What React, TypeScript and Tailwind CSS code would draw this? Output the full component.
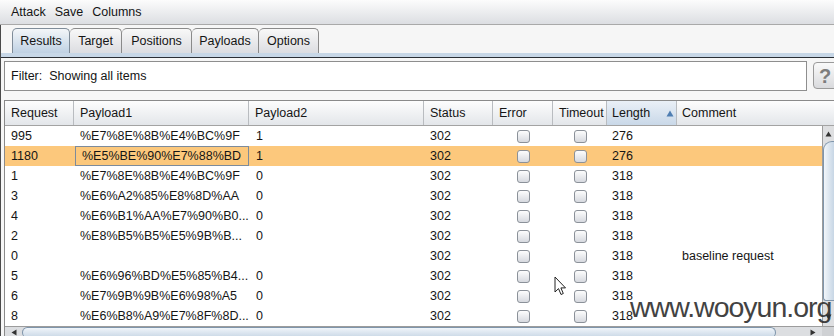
const rows = [
  { req: '995', p1: '%E7%8E%8B%E4%BC%9F', p2: '1', len: '276', comment: '' },
  { req: '1180', p1: '%E5%BE%90%E7%88%BD', p2: '1', len: '276', comment: '', selected: true },
  { req: '1', p1: '%E7%8E%8B%E4%BC%9F', p2: '0', len: '318', comment: '' },
  { req: '3', p1: '%E6%A2%85%E8%8D%AA', p2: '0', len: '318', comment: '' },
  { req: '4', p1: '%E6%B1%AA%E7%90%B0...', p2: '0', len: '318', comment: '' },
  { req: '2', p1: '%E8%B5%B5%E5%9B%B...', p2: '0', len: '318', comment: '' },
  { req: '0', p1: '', p2: '', len: '318', comment: 'baseline request' },
  { req: '5', p1: '%E6%96%BD%E5%85%B4...', p2: '0', len: '318', comment: '' },
  { req: '6', p1: '%E7%9B%9B%E6%98%A5', p2: '0', len: '318', comment: '' },
  { req: '8', p1: '%E6%B8%A9%E7%8F%8D...', p2: '0', len: '318', comment: '' },
]

const tabs = [
  { label: 'Results', w: 'w-[58px]' },
  { label: 'Target', w: 'w-[52px]' },
  { label: 'Positions', w: 'w-[70px]' },
  { label: 'Payloads', w: 'w-[67px]' },
  { label: 'Options', w: 'w-[60px]' },
]

function Checkbox() {
  return (
    <span className="block w-[13px] h-[13px] rounded-[3px] border border-[#8b9199] bg-gradient-to-b from-[#fdfdfd] to-[#d6d9df]" />
  )
}

export default function App() {
  return (
    <div className="relative w-[834px] h-[336px] overflow-hidden bg-[#f6f6f6] text-[#151515] text-[12.5px] font-['Liberation_Sans',Arial,sans-serif]">
      {/* Menu bar */}
      <div className="h-[25px] flex items-center gap-[9px] pl-[11px] border-b border-[#a9a9a9] bg-gradient-to-b from-[#fcfcfc] to-[#dcdee2]">
        <span>Attack</span>
        <span>Save</span>
        <span>Columns</span>
      </div>

      <div className="border-l border-[#4a4a4a] h-[311px]">
        {/* Tabs */}
        <div className="h-[28px] flex items-end pl-[11px]">
          {tabs.map((t, i) => (
            <div
              key={t.label}
              className={
                i === 0
                  ? `${t.w} h-[25px] flex items-center justify-center rounded-t-[5px] border border-b-0 border-[#7f8c99] bg-gradient-to-b from-[#f3f6f9] to-[#bfd1e3]`
                  : `${t.w} h-[25px] flex items-center justify-center rounded-t-[5px] border border-b-0 border-l-0 border-[#8a8a8a] bg-gradient-to-b from-[#f8f8f8] to-[#dcdde1]`
              }
            >
              {t.label}
            </div>
          ))}
        </div>
        <div className="h-[4px] bg-[#c7d7e7]" />
        <div className="h-[1px] bg-[#2b2f35]" />

        {/* Filter */}
        <div className="flex mt-[3px] pl-[3px]">
          <div className="w-[803px] h-[30px] shrink-0 flex items-center pl-[6px] bg-white border border-[#8e8e8e]">
            Filter:&nbsp; Showing all items
          </div>
          <div className="ml-[6px] mt-[1px] w-[28px] h-[27px] shrink-0 rounded-[4px] border border-[#9a9a9a] bg-gradient-to-b from-[#fafafa] to-[#d9dadd] flex items-center pl-[5px] text-[20px] font-bold text-[#7d7d7d]">
            ?
          </div>
        </div>

        {/* Table */}
        <div className="mt-[9px] ml-[3px] border-l border-t border-[#8a8a8a]">
          <div className="h-[25px] grid grid-cols-[69px_175px_175px_69px_60px_54px_70px_1fr] border-b border-[#a3a3a3] bg-gradient-to-b from-[#fdfdfd] to-[#e3e6ea]">
            {['Request', 'Payload1', 'Payload2', 'Status', 'Error', 'Timeout'].map((h) => (
              <div key={h} className="flex items-center pl-[6px] border-r border-[#b9bcc0]">
                {h}
              </div>
            ))}
            <div className="flex items-center pl-[5px] border-r border-[#b9bcc0] bg-gradient-to-b from-[#eaf0f7] to-[#c9d8e8]">
              Length
              <svg className="ml-[16px]" width="8" height="7" viewBox="0 0 8 7">
                <path d="M4 0.5 L7.5 6.5 L0.5 6.5 Z" fill="#4f7eb2" />
              </svg>
            </div>
            <div className="flex items-center pl-[5px]">Comment</div>
          </div>

          <div className="flex">
            <div className="w-[817px] bg-white">
              {rows.map((r) => (
                <div
                  key={r.req}
                  className={`h-[20px] grid grid-cols-[69px_175px_175px_69px_60px_54px_70px_1fr] items-center ${
                    r.selected ? 'bg-[#fcc87c]' : 'bg-white'
                  }`}
                >
                  <div className="pl-[6px]">{r.req}</div>
                  <div
                    className={`h-[20px] flex items-center pl-[6px] ${
                      r.selected ? 'border border-[#7d8b9b] ml-[1px] pl-[5px]' : ''
                    }`}
                  >
                    {r.p1}
                  </div>
                  <div className="pl-[7px]">{r.p2}</div>
                  <div className="pl-[6px]">302</div>
                  <div className="flex justify-center pl-[1px]">
                    <Checkbox />
                  </div>
                  <div className="flex justify-center">
                    <Checkbox />
                  </div>
                  <div className="pl-[5px]">{r.len}</div>
                  <div className="pl-[5px]">{r.comment}</div>
                </div>
              ))}
            </div>

            {/* Vertical scrollbar */}
            <div className="w-[12px] h-[200px] flex flex-col bg-[#dedfe1] border-l border-[#9c9c9c]">
              <div className="h-[15px] flex items-center justify-center">
                <svg width="7" height="6" viewBox="0 0 7 6">
                  <path d="M3.5 0.5 L6.5 5.5 L0.5 5.5 Z" fill="#333" />
                </svg>
              </div>
              <div className="h-[160px] rounded-tl-[9px] rounded-bl-[3px] border border-r-0 border-[#7f95ab] bg-gradient-to-r from-[#f2f6fa] to-[#c7d6e5]" />
              <div className="flex-1 flex items-end justify-center pb-[6px]">
                <svg width="7" height="6" viewBox="0 0 7 6">
                  <path d="M0.5 0.5 L6.5 0.5 L3.5 5.5 Z" fill="#333" />
                </svg>
              </div>
            </div>
          </div>

          {/* Horizontal scrollbar */}
          <div className="h-[12px] flex border-t border-[#9c9c9c] bg-[#dcdee1]">
            <div className="w-[17px] flex items-center justify-center">
              <svg width="6" height="7" viewBox="0 0 6 7">
                <path d="M0.5 3.5 L5.5 0.5 L5.5 6.5 Z" fill="#333" />
              </svg>
            </div>
            <div className="w-[754px] rounded-l-[10px] rounded-r-[10px] border border-b-0 border-[#7f95ab] bg-gradient-to-b from-[#f0f5fa] to-[#c6d5e4]" />
            <div className="w-[46px] flex items-center justify-end pr-[6px]">
              <svg width="6" height="7" viewBox="0 0 6 7">
                <path d="M5.5 3.5 L0.5 0.5 L0.5 6.5 Z" fill="#333" />
              </svg>
            </div>
            <div className="flex-1 bg-[#cfd1d4]" />
          </div>
        </div>
      </div>

      {/* Mouse cursor */}
      <svg className="absolute left-[554px] top-[276px]" width="13" height="21" viewBox="0 0 13 21">
        <path d="M1 1 L1 16 L4.5 12.6 L7 18.5 L9.3 17.5 L6.9 11.9 L11.5 11.9 Z" fill="#fff" stroke="#222" strokeWidth="1" strokeLinejoin="round" />
      </svg>

      {/* Watermark */}
      <div className="absolute left-[630px] top-[293px] text-[28.5px] leading-none tracking-[-1px] text-[#2e2e2e] opacity-90 font-['Liberation_Sans',Arial,sans-serif]">
        www.wooyun.org
      </div>
    </div>
  )
}
